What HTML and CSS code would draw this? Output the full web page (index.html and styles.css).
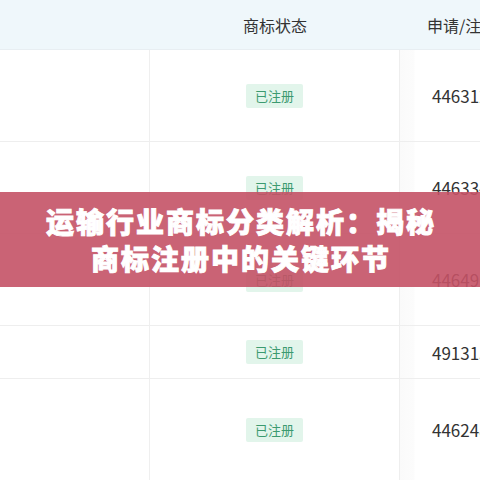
FILE: index.html
```html
<!DOCTYPE html>
<html lang="zh">
<head>
<meta charset="utf-8">
<link rel="stylesheet" href="styles.css">
</head>
<body>
<div class="page">
  <div class="table">
    <div class="row head">
      <div class="cell c1"></div>
      <div class="cell c2">商标状态</div>
      <div class="cell c3">申请/注册号</div>
    </div>
    <div class="row tall">
      <div class="cell c1"></div>
      <div class="cell c2"><span class="tag">已注册</span></div>
      <div class="cell c3">44631234</div>
    </div>
    <div class="row tall">
      <div class="cell c1"></div>
      <div class="cell c2"><span class="tag">已注册</span></div>
      <div class="cell c3">44633456</div>
    </div>
    <div class="row tall">
      <div class="cell c1"></div>
      <div class="cell c2"><span class="tag">已注册</span></div>
      <div class="cell c3">44649012</div>
    </div>
    <div class="row short">
      <div class="cell c1"></div>
      <div class="cell c2"><span class="tag">已注册</span></div>
      <div class="cell c3">49131567</div>
    </div>
    <div class="row last">
      <div class="cell c1"></div>
      <div class="cell c2"><span class="tag">已注册</span></div>
      <div class="cell c3">44624890</div>
    </div>
  </div>
  <div class="banner">
    <div class="banner-text">运输行业商标分类解析：揭秘<br>商标注册中的关键环节</div>
  </div>
</div>
</body>
</html>
```

FILE: styles.css
```css
* { box-sizing: border-box; }
html, body {
  margin: 0;
  padding: 0;
  width: 480px;
  height: 480px;
  overflow: hidden;
  background: #fff;
}
body {
  font-family: "Noto Sans CJK SC", "Noto Sans", sans-serif;
  color: #333;
}
.page {
  position: relative;
  width: 480px;
  height: 480px;
  overflow: hidden;
}
.table {
  width: 560px;
}
.row {
  display: grid;
  grid-template-columns: 150px 250px 160px;
  border-bottom: 1px solid #eeeeee;
}
.row.head {
  height: 50px;
  background: #eff7fb;
  border-bottom: 1px solid #e8eef2;
}
.row.tall { height: 92px; }
.row.short { height: 53px; }
.row.last { height: 102px; }
.cell {
  display: flex;
  align-items: center;
  font-size: 16px;
  white-space: nowrap;
}
.c1 {
  border-right: 1px solid #efefef;
}
.head .c1 { border-right: none; }
.c2 {
  justify-content: center;
  border-right: 1px solid #eeeeee;
}
.head .c2 { border-right: none; }
.c3 {
  padding-left: 32px;
  font-size: 17px;
  background: linear-gradient(to right, #fafafa 0, #fcfcfc 14px, #fff 15px);
}
.head .c3 {
  background: none;
  padding-left: 27px;
  font-size: 16px;
}
.tag {
  display: inline-block;
  height: 24px;
  line-height: 24px;
  padding: 0 9px;
  font-size: 13px;
  color: #3c9a70;
  background: #e2f5eb;
  border-radius: 2px;
}
.banner {
  position: absolute;
  left: 0;
  top: 192px;
  width: 480px;
  height: 95px;
  background: rgba(196, 82, 102, 0.9);
  display: flex;
  align-items: center;
  justify-content: center;
}
.banner-text {
  color: #fff;
  font-weight: 900;
  font-size: 28px;
  line-height: 37px;
  letter-spacing: 2px;
  text-align: center;
  margin-right: -2px;
  -webkit-text-stroke: 0.9px #fff;
}
```
